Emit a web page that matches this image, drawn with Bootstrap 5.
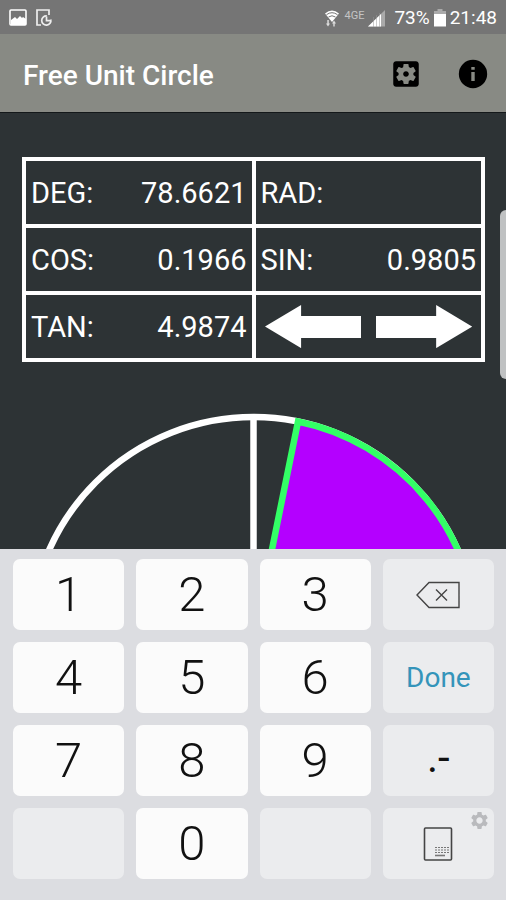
<!DOCTYPE html>
<html lang="en">
<head>
<meta charset="utf-8">
<meta name="viewport" content="width=device-width, initial-scale=1">
<title>Free Unit Circle</title>
<link rel="stylesheet" href="https://cdn.jsdelivr.net/npm/bootstrap@5.3.0/dist/css/bootstrap.min.css">
<style>
  body { font-family: Roboto, "Liberation Sans", sans-serif; background: #2d3335; color: #fff; }
  svg { display: block; flex: none; }
  .status-bar { background: #757575; height: 34px; padding: 2px 9px 0; font-size: 19px; line-height: 32px; }
  .net-type { font-size: 11px; color: #c4c4c4; line-height: 12px; margin-bottom: 5px; }
  .app-bar { background: #888a84; height: 79px; padding: 2px 16px 0 23px; border-bottom: 1px solid #14181a; }
  .app-title { font-size: 28px; font-weight: 500; line-height: 32px; }
  .bar-actions { gap: 33px; }
  .icon-btn { border: 0; background: none; padding: 0; color: #000; }
  .app-body { padding-top: 44px; }
  .values-wrap { padding: 0 21px 0 22px; margin-bottom: 49px; }
  .values { width: 100%; table-layout: fixed; border-collapse: collapse; font-size: 29px; line-height: 36px; }
  .values td { border: 4px solid #fff; height: 67px; padding: 0 5px; }
  .values input { background: none; border: 0; color: inherit; padding: 0; text-align: right; width: 100%; min-width: 0; outline: 0; }
  .arrows { gap: 15px; padding: 0 4px; }
  .arrows button { flex: 1 1 0; }
  .arrows svg { width: 100%; }
  .edge-handle { top: 210px; right: 0; width: 6px; height: 169px; background: #bfc1c2; border-radius: 6px 0 0 6px; }
  .keypad { background: #dcdde1; padding: 10px 12px 21px 13px; display: grid; grid-template-columns: repeat(4, 1fr); gap: 12px; }
  .key { height: 71px; border: 0; border-radius: 7px; background: #fbfbfb; color: #111; font-size: 49px; font-weight: 300; line-height: 71px; padding: 0; }
  .key-soft { background: #ebecee; }
  .key-done { color: #3494ba; font-size: 28px; font-weight: 400; }
  .key-sym { font-size: 42px; font-weight: 400; line-height: 66px; padding-bottom: 5px; }
  .key-gear { top: 2px; right: 4px; }
</style>
<script src="https://cdn.jsdelivr.net/npm/bootstrap@5.3.0/dist/js/bootstrap.bundle.min.js"></script>
</head>
<body>
<div class="d-flex flex-column min-vh-100 position-relative">
  <div class="status-bar d-flex align-items-center justify-content-between">
    <div class="d-flex align-items-center gap-2">
      <svg width="18" height="18" viewBox="0 0 18 18"><rect x="1" y="1" width="16" height="15" rx="1" fill="none" stroke="#fff" stroke-width="1.6"/><path d="M2 11l4-3 2 2 3-3 2 2 1-1 3 2v6H2z" fill="#fff"/></svg>
      <svg width="18" height="18" viewBox="0 0 18 18" fill="none" stroke="#eee" stroke-width="1.7"><path d="M6 16H2V1h12v5"/><path d="M15.800 10.500a4.600 4.600 0 1 1-4-3.600"/><path d="M11.500 7.500v4.200h4"/></svg>
    </div>
    <div class="d-flex align-items-center">
      <svg class="me-1" width="16" height="18" viewBox="0 0 16 18"><path d="M1 4.500Q8-1.500 15 4.500L8 13z" fill="#fff"/><path d="M2.500 5.700q5.500-4 11 0M4.500 8q3.500-2.500 7 0" fill="none" stroke="#757575" stroke-width="1"/><path d="M4 17.500l-2-3h1.300V11h1.500v3.500H6zM10 11.500l2 3h-1.300v3H9.300v-3H8z" fill="#ddd"/></svg>
      <span class="net-type me-1">4GE</span>
      <svg width="18" height="18" viewBox="0 0 18 18"><path d="M0 17.500L17 1v16.500z" fill="#aaa"/><path d="M0 17.500L13 4.900v12.600z" fill="#fff"/><path d="M5.500 8v10M8.500 6v12M11.500 4v14" stroke="#999" stroke-width=".5"/></svg>
      <span class="ms-2">73%</span>
      <svg class="mx-1" width="12" height="18" viewBox="0 0 12 18"><path d="M3.500 0h5v2H12v3H0V2h3.500z" fill="#aaa"/><path d="M0 5h12v12.500H0z" fill="#fff"/></svg>
      <span>21:48</span>
    </div>
  </div>

  <header class="app-bar d-flex align-items-center justify-content-between">
    <h1 class="app-title m-0 pt-1">Free Unit Circle</h1>
    <div class="bar-actions d-flex">
      <button type="button" class="icon-btn" aria-label="Settings"><svg width="34" height="34" viewBox="0 0 24 24" fill="currentColor"><path d="M12 10c-1.100 0-2 .9-2 2s.9 2 2 2 2-.9 2-2-.9-2-2-2zm7-7H5c-1.110 0-2 .9-2 2v14c0 1.100.89 2 2 2h14c1.110 0 2-.9 2-2V5c0-1.100-.89-2-2-2zm-1.750 9c0 .23-.02.46-.05.68l1.480 1.160c.13.11.17.3.08.45l-1.400 2.420c-.09.15-.27.21-.43.15l-1.740-.7c-.36.28-.76.51-1.180.69l-.26 1.850c-.03.17-.18.3-.35.3h-2.800c-.17 0-.32-.13-.35-.29l-.26-1.850c-.43-.18-.82-.41-1.180-.69l-1.740.7c-.16.06-.34 0-.43-.15l-1.400-2.420c-.09-.15-.05-.34.08-.45l1.480-1.160c-.03-.23-.05-.46-.05-.69 0-.23.02-.46.05-.68l-1.480-1.160c-.13-.11-.17-.3-.08-.45l1.400-2.420c.09-.15.27-.21.43-.15l1.740.7c.36-.28.76-.51 1.180-.69l.26-1.850c.03-.17.18-.3.35-.3h2.800c.17 0 .32.13.35.29l.26 1.850c.43.18.82.41 1.180.69l1.740-.7c.16-.06.34 0 .43.15l1.400 2.420c.09.15.05.34-.08.45l-1.480 1.160c.03.23.05.46.05.69z"/></svg></button>
      <button type="button" class="icon-btn" aria-label="About"><svg width="34" height="34" viewBox="0 0 24 24"><circle cx="12" cy="12" r="10"/><path d="M10.800 7h2.400v2h-2.400zM10.800 10.500h2.400V17h-2.400z" fill="#888a84"/></svg></button>
    </div>
  </header>

  <main class="app-body flex-grow-1 d-flex flex-column">
    <div class="values-wrap">
      <table class="values">
        <tbody>
          <tr>
            <td><div class="d-flex"><label for="deg">DEG:</label><input id="deg" type="text" value="78.6621"></div></td>
            <td><div class="d-flex"><label for="rad">RAD:</label><input id="rad" type="text" value=""></div></td>
          </tr>
          <tr>
            <td><div class="d-flex justify-content-between"><label for="cos">COS:</label><output id="cos">0.1966</output></div></td>
            <td><div class="d-flex justify-content-between"><label for="sin">SIN:</label><output id="sin">0.9805</output></div></td>
          </tr>
          <tr>
            <td><div class="d-flex justify-content-between"><label for="tan">TAN:</label><output id="tan">4.9874</output></div></td>
            <td><div class="arrows d-flex">
              <button type="button" class="icon-btn" aria-label="Previous"><svg viewBox="0 0 96 43"><path d="M0 21.500L36 0v11h60v22H36v10z" fill="#fff"/></svg></button>
              <button type="button" class="icon-btn" aria-label="Next"><svg viewBox="0 0 96 43"><path d="M96 21.500L60 0v11H0v22h60v10z" fill="#fff"/></svg></button>
            </div></td>
          </tr>
        </tbody>
      </table>
    </div>
    <svg class="w-100" viewBox="0 0 506 138" role="img" aria-label="Unit circle">
      <circle cx="253.500" cy="229.500" r="223.500" fill="none" stroke="#fff" stroke-width="6.500"/>
      <path d="M253.500 4V138" stroke="#fff" stroke-width="6.500"/>
      <path d="M253.500 229.500L298 10.500A223.500 223.500 0 0 1 477 229.500z" fill="#b400ff" stroke="#33ff66" stroke-width="6.500"/>
    </svg>
  </main>

  <section class="keypad" aria-label="Number pad">
    <button type="button" class="key">1</button>
    <button type="button" class="key">2</button>
    <button type="button" class="key">3</button>
    <button type="button" class="key key-soft d-flex align-items-center justify-content-center" aria-label="Backspace"><svg width="44" height="28" viewBox="0 0 44 28" fill="none" stroke="#444" stroke-width="1.400"><path d="M1 14L13 1.500h30v25H13zM20 8.500l11 11M31 8.500l-11 11"/></svg></button>
    <button type="button" class="key">4</button>
    <button type="button" class="key">5</button>
    <button type="button" class="key">6</button>
    <button type="button" class="key key-soft key-done">Done</button>
    <button type="button" class="key">7</button>
    <button type="button" class="key">8</button>
    <button type="button" class="key">9</button>
    <button type="button" class="key key-soft key-sym">.-</button>
    <button type="button" class="key key-soft" aria-label="Blank left" disabled></button>
    <button type="button" class="key">0</button>
    <button type="button" class="key key-soft" aria-label="Blank right" disabled></button>
    <button type="button" class="key key-soft position-relative d-flex align-items-center justify-content-center" aria-label="Keyboard layout">
      <svg width="30" height="34" viewBox="0 0 30 34" fill="none" stroke="#444"><rect x="1.500" y="1" width="27" height="32" rx="1" stroke-width="1.600"/><path d="M12 20.500h14M12 23h14M12 25.500h14" stroke-dasharray="2 1" stroke="#777" stroke-width="1.200"/><path d="M12 28.500h10" stroke="#777" stroke-width="1.600"/></svg>
      <svg class="key-gear position-absolute" width="21" height="21" viewBox="0 0 24 24" fill="#b9babd"><path d="M19.140 12.940c.04-.3.06-.61.06-.94 0-.32-.02-.64-.07-.94l2.030-1.580c.18-.14.23-.41.12-.61l-1.920-3.320c-.12-.22-.37-.29-.59-.22l-2.390.96c-.5-.38-1.030-.7-1.620-.94l-.36-2.540c-.04-.24-.24-.41-.48-.41h-3.840c-.24 0-.43.17-.47.41l-.36 2.540c-.59.24-1.130.57-1.620.94l-2.390-.96c-.22-.08-.47 0-.59.22L2.740 8.870c-.12.21-.08.47.12.61l2.030 1.580c-.05.3-.09.63-.09.94s.02.64.07.94l-2.030 1.580c-.18.14-.23.41-.12.61l1.920 3.320c.12.22.37.29.59.22l2.390-.96c.5.38 1.030.7 1.620.94l.36 2.540c.05.24.24.41.48.41h3.840c.24 0 .44-.17.47-.41l.36-2.540c.59-.24 1.130-.56 1.620-.94l2.390.96c.22.08.47 0 .59-.22l1.920-3.320c.12-.22.07-.47-.12-.61l-2.010-1.580zM12 15.600c-1.980 0-3.600-1.620-3.600-3.600s1.620-3.600 3.600-3.600 3.600 1.620 3.600 3.600-1.620 3.600-3.600 3.600z"/></svg>
    </button>
  </section>
  <div class="edge-handle position-absolute"></div>
</div>
</body>
</html>
